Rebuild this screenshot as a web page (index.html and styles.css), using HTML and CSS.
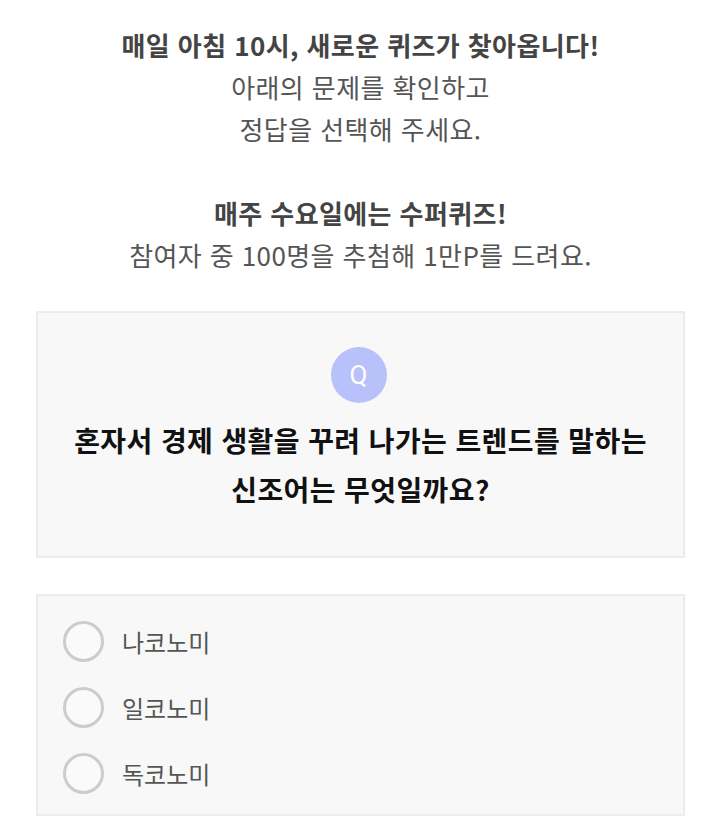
FILE: index.html
```html
<!DOCTYPE html>
<html lang="ko">
<head>
    <meta charset="UTF-8">
    <meta name="viewport" content="width=device-width, initial-scale=1.0">
    <title>오늘의 퀴즈</title>
    <link rel="stylesheet" href="styles.css">
</head>
<body>
    <div class="intro">
        <p><strong>매일 아침 10시, 새로운 퀴즈가 찾아옵니다!</strong><br>
        아래의 문제를 확인하고<br>
        정답을 선택해 주세요.</p>
        <p><strong>매주 수요일에는 수퍼퀴즈!</strong><br>
        참여자 중 100명을 추첨해 1만P를 드려요.</p>
    </div>

    <div class="question">
        <span class="q-badge">Q</span>
        <h2>혼자서 경제 생활을 꾸려 나가는 트렌드를 말하는<br>신조어는 무엇일까요?</h2>
    </div>

    <div class="answers">
        <label class="answer">
            <input type="radio" name="quiz" value="1">
            <span class="mark"></span>
            <span class="text">나코노미</span>
        </label>
        <label class="answer">
            <input type="radio" name="quiz" value="2">
            <span class="mark"></span>
            <span class="text">일코노미</span>
        </label>
        <label class="answer">
            <input type="radio" name="quiz" value="3">
            <span class="mark"></span>
            <span class="text">독코노미</span>
        </label>
    </div>
</body>
</html>
```

FILE: styles.css
```css
body {
    margin: 0;
    padding: 24px 35px 0 36px;
    font-family: "Noto Sans CJK KR", "Noto Sans", sans-serif;
    background-color: #fff;
    color: #555;
}
.intro {
    text-align: center;
    font-size: 26px;
    line-height: 42px;
    letter-spacing: 0.4px;
}
.intro p {
    margin: 0 0 42px 0;
}
.intro p:last-child {
    margin-bottom: 0;
}
.intro strong {
    font-weight: 700;
    color: #444;
}
.question {
    margin-top: 35px;
    padding: 34px 20px 42px;
    background-color: #f8f8f8;
    border: 2px solid #ececec;
    text-align: center;
}
.q-badge {
    display: inline-flex;
    align-items: center;
    justify-content: center;
    width: 56px;
    height: 56px;
    margin-right: 4px;
    border-radius: 50%;
    background-color: #b9c1fb;
    color: #fff;
    font-family: Roboto, "Noto Sans", sans-serif;
    font-size: 26px;
}
.question h2 {
    margin: 13px 0 0 0;
    font-size: 28px;
    line-height: 49px;
    font-weight: 700;
    color: #111;
    letter-spacing: 0.4px;
}
.answers {
    margin-top: 36px;
    padding: 12px 25px 8px;
    background-color: #f8f8f8;
    border: 2px solid #ececec;
}
.answer {
    display: flex;
    align-items: center;
    height: 66px;
    cursor: pointer;
}
.answer input {
    display: none;
}
.mark {
    box-sizing: border-box;
    width: 41px;
    height: 41px;
    border: 3px solid #cccccc;
    border-radius: 50%;
    background-color: #fafafa;
}
.answer input:checked + .mark {
    border-color: #b9c1fb;
    border-width: 12px;
}
.text {
    margin-left: 18px;
    font-size: 24px;
    color: #555;
}
```
